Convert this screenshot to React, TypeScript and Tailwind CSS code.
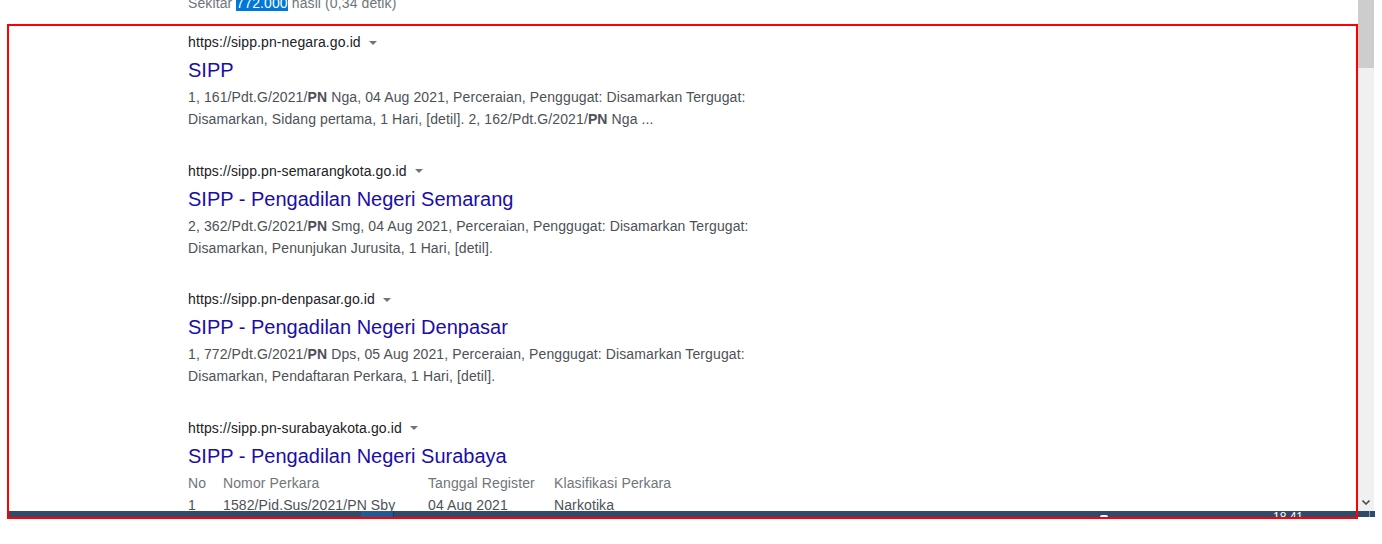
import React from 'react';

interface Result {
    url: string;
    title: string;
    lines?: React.ReactNode[];
}

const results: Result[] = [
    {
        url: 'https://sipp.pn-negara.go.id',
        title: 'SIPP',
        lines: [
            <>1, 161/Pdt.G/2021/<b>PN</b> Nga, 04 Aug 2021, Perceraian, Penggugat: Disamarkan Tergugat:</>,
            <>Disamarkan, Sidang pertama, 1 Hari, [detil]. 2, 162/Pdt.G/2021/<b>PN</b> Nga ...</>,
        ],
    },
    {
        url: 'https://sipp.pn-semarangkota.go.id',
        title: 'SIPP - Pengadilan Negeri Semarang',
        lines: [
            <>2, 362/Pdt.G/2021/<b>PN</b> Smg, 04 Aug 2021, Perceraian, Penggugat: Disamarkan Tergugat:</>,
            <>Disamarkan, Penunjukan Jurusita, 1 Hari, [detil].</>,
        ],
    },
    {
        url: 'https://sipp.pn-denpasar.go.id',
        title: 'SIPP - Pengadilan Negeri Denpasar',
        lines: [
            <>1, 772/Pdt.G/2021/<b>PN</b> Dps, 05 Aug 2021, Perceraian, Penggugat: Disamarkan Tergugat:</>,
            <>Disamarkan, Pendaftaran Perkara, 1 Hari, [detil].</>,
        ],
    },
    {
        url: 'https://sipp.pn-surabayakota.go.id',
        title: 'SIPP - Pengadilan Negeri Surabaya',
    },
];

function ResultItem({ result, children }: { result: Result; children?: React.ReactNode }) {
    return (
        <div className="flex flex-col">
            <div className="flex items-center h-[22px] leading-[22px] text-[14px] tracking-[0.11px] text-[#202124]">
                <span>{result.url}</span>
                <span className="ml-[8px] mt-[1px] w-0 h-0 border-x-4 border-t-4 border-x-transparent border-t-[#70757a]" />
            </div>
            <div className="mt-[4px] leading-[26px] text-[20px] text-[#1a0dab] whitespace-nowrap">{result.title}</div>
            <div className="mt-[3px] text-[14px] leading-[22px] tracking-[0.11px] text-[#4d5156] whitespace-nowrap">
                {result.lines?.map((line, i) => (
                    <div key={i}>{line}</div>
                ))}
                {children}
            </div>
        </div>
    );
}

function CaseTable() {
    return (
        <div className="grid grid-cols-[35px_205px_126px_auto] text-[14px] leading-[22px] whitespace-nowrap">
            <div className="text-[#70757a]">No</div>
            <div className="text-[#70757a]">Nomor Perkara</div>
            <div className="text-[#70757a]">Tanggal Register</div>
            <div className="text-[#70757a]">Klasifikasi Perkara</div>
            <div>1</div>
            <div>1582/Pid.Sus/2021/PN Sby</div>
            <div>04 Aug 2021</div>
            <div>Narkotika</div>
        </div>
    );
}

export default function App() {
    return (
        <div
            className="relative w-[1382px] h-[544px] bg-white overflow-hidden"
            style={{ fontFamily: '"Liberation Sans", Arial, sans-serif' }}
        >
            <div className="flex h-[511px]">
                <main className="w-[1358px] h-full overflow-hidden pl-[188px]">
                    <div className="h-[24px] overflow-hidden">
                        <div className="-mt-[8px] leading-[22px] text-[14px] tracking-[0.11px] text-[#70757a] whitespace-nowrap">
                            Sekitar <span className="bg-[#0078d7] text-white">772.000</span> hasil (0,34 detik)
                        </div>
                    </div>
                    <div className="pt-[7px] flex flex-col gap-[29.67px]">
                        {results.map((r, i) => (
                            <ResultItem key={r.url} result={r}>
                                {i === results.length - 1 && <CaseTable />}
                            </ResultItem>
                        ))}
                    </div>
                </main>
                {/* scrollbar */}
                <div className="w-[16px] h-full bg-[#f0f0f0] flex flex-col">
                    <div className="h-[68px] bg-[#cdcdcd]" />
                    <div className="flex-1" />
                    <div className="flex justify-center pb-[6px]">
                        <svg width="8" height="5" viewBox="0 0 8 5">
                            <path d="M0.5 0.5 L4 4 L7.5 0.5" fill="none" stroke="#505050" strokeWidth="1.6" />
                        </svg>
                    </div>
                </div>
            </div>
            {/* taskbar strip */}
            <div className="ml-[7px] w-[1368px] h-[6px] bg-[#2f4a6b] flex overflow-hidden">
                <div className="w-[354px] shrink-0" />
                <div className="w-[32px] shrink-0 bg-[#1e5b97]" />
                <div className="w-px shrink-0 bg-[#123a62]" />
                <div className="w-[706px] shrink-0" />
                <div className="w-[8px] h-[2px] mt-[4px] shrink-0 bg-white rounded-t" />
                <div className="w-[165px] shrink-0" />
                <div className="text-[12px] leading-[12px] text-white shrink-0">18.41</div>
                <div className="flex-1" />
                <div className="w-px shrink-0 bg-[#8a9bb0]" />
                <div className="w-[5px] shrink-0" />
            </div>
            {/* annotation frame */}
            <div className="absolute left-[7px] top-[24px] w-[1351px] h-[495px] border-2 border-[#ff0000] pointer-events-none" />
        </div>
    );
}
